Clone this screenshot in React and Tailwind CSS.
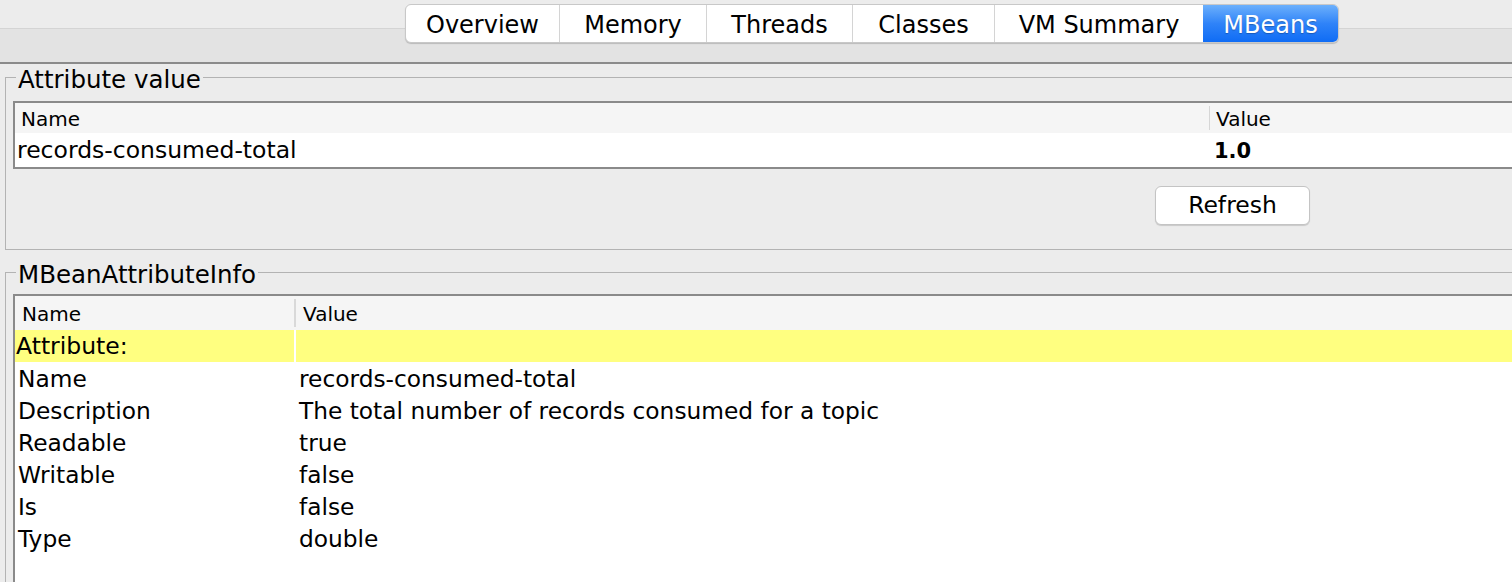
import React from "react";

const tabs = [
  { label: "Overview", w: "w-[153px]" },
  { label: "Memory", w: "w-[147px]" },
  { label: "Threads", w: "w-[146px]" },
  { label: "Classes", w: "w-[142px]" },
  { label: "VM Summary", w: "w-[209px]" },
  { label: "MBeans", w: "w-[135px]", active: true },
];

const infoRows = [
  ["Name", "records-consumed-total"],
  ["Description", "The total number of records consumed for a topic"],
  ["Readable", "true"],
  ["Writable", "false"],
  ["Is", "false"],
  ["Type", "double"],
];

const TabBar = () => (
  <div className="h-[64px] shrink-0 border-b-2 border-[#8b8b8b] pt-[4px] pl-[405px] bg-[linear-gradient(to_bottom,#ececec_0px,#ececec_28px,#d4d4d4_28px,#d4d4d4_29px,#e3e3e3_29px,#e3e3e3_100%)]">
    <div className="flex h-[39px] w-fit rounded-[6px] border border-[#c8c8c8] bg-white shadow-[0_1px_1px_rgba(0,0,0,0.18)] overflow-hidden">
      {tabs.map((t, i) => (
        <div
          key={t.label}
          className={
            t.active
              ? `${t.w} flex items-center justify-center pt-[3px] text-[24px] text-white bg-[linear-gradient(to_bottom,#6cb0fc,#2f83f8_50%,#0f6cf5)] [text-shadow:0_1px_1px_rgba(0,0,0,0.25)]`
              : `${t.w} flex items-center justify-center pt-[3px] text-[24px] ${i > 0 ? "border-l border-[#d4d4d4]" : ""}`
          }
        >
          {t.label}
        </div>
      ))}
    </div>
  </div>
);

const Panel = ({ title, className = "", children }) => (
  <fieldset className={`w-[1540px] border border-[#b3b3b3] ${className}`}>
    <legend className="ml-[10px] px-[2px] pt-[6px] text-[24.5px] leading-[26px]">{title}</legend>
    {children}
  </fieldset>
);

export default function App() {
  return (
    <div className="w-[1512px] h-[582px] overflow-hidden bg-[#ececec] flex flex-col text-black font-['DejaVu_Sans',sans-serif]">
      <TabBar />
      <div className="flex-1 flex flex-col pl-[5px]">
        {/* Attribute value */}
        <Panel title="Attribute value" className="shrink-0 -mt-[3px]">
          <div className="mt-[8px] ml-[7px] border-2 border-[#8a8a8a] bg-white">
            <div className="flex h-[30px] bg-[#f5f5f5] text-[20px]">
              <div className="w-[1194px] flex items-center pl-[6px] pt-[2px]">Name</div>
              <div className="w-px my-[3px] bg-[#d6d6d6]" />
              <div className="flex items-center pl-[6px] pt-[2px]">Value</div>
            </div>
            <div className="flex h-[34px] text-[23.5px]">
              <div className="w-[1194px] flex items-center pl-[2px] pt-[2px]">records-consumed-total</div>
              <div className="flex items-center pl-[5px] pt-[3px] text-[21px] font-bold">1.0</div>
            </div>
          </div>
          <button className="mt-[17px] mb-[24px] ml-[1149px] h-[39px] w-[155px] rounded-[6px] border border-[#c4c4c4] bg-white shadow-[0_1px_1px_rgba(0,0,0,0.15)] text-[23.5px] flex items-center justify-center pt-[1px]">
            Refresh
          </button>
        </Panel>

        {/* MBeanAttributeInfo */}
        <Panel title="MBeanAttributeInfo" className="mt-[6px] flex-1">
          <div className="mt-[6px] ml-[7px] h-[400px] border-2 border-b-0 border-[#8a8a8a] bg-white">
            <div className="flex h-[34px] bg-[#f5f5f5] text-[20px]">
              <div className="w-[279px] flex items-center pl-[7px] pt-[2px]">Name</div>
              <div className="w-[2px] my-[3px] bg-[#d9d9d9]" />
              <div className="flex items-center pl-[7px] pt-[2px]">Value</div>
            </div>
            <div className="flex h-[32px] text-[23.5px]">
              <div className="w-[279px] flex items-center pl-[1px] pt-[2px] bg-[#ffff80]">Attribute:</div>
              <div className="w-[2px] bg-white" />
              <div className="flex-1 bg-[#ffff80]" />
            </div>
            {infoRows.map(([k, v]) => (
              <div key={k} className="flex h-[32px] text-[23.3px]">
                <div className="w-[279px] flex items-center pl-[3px] pt-[2px]">{k}</div>
                <div className="w-[2px]" />
                <div className="flex items-center pl-[3px] pt-[2px]">{v}</div>
              </div>
            ))}
          </div>
        </Panel>
      </div>
    </div>
  );
}
